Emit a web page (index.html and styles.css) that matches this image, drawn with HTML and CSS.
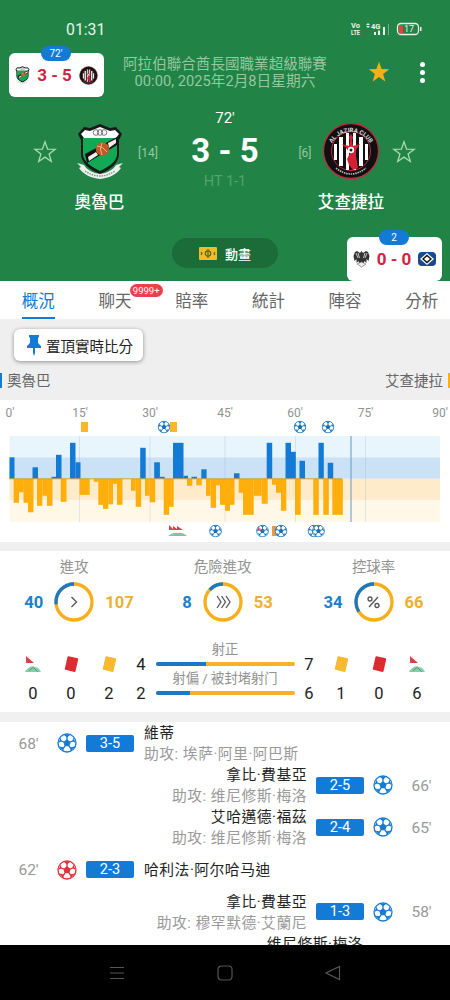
FILE: index.html
```
<!DOCTYPE html>
<html lang="zh-Hant">
<head>
<title>奧魯巴 3 - 5 艾查捷拉</title>
<meta charset="UTF-8">
<meta name="viewport" content="width=device-width, initial-scale=1.0">
<link rel="stylesheet" href="styles.css">
</head>
<body>

<svg class="defs" width="0" height="0">
  <symbol id="ball" viewBox="0 0 20 20">
    <circle cx="10" cy="10" r="9" fill="#fff" stroke="currentColor" stroke-width="1.3"/>
    <path d="M10 6.200l3.700 2.700-1.400 4.300H7.700L6.300 8.900z" fill="currentColor"/>
    <path d="M10 7V3M13 9l4-1.400M12 13l2.500 3.400M8 13l-2.500 3.400M7 9L3 7.600" stroke="currentColor" stroke-width="1.300"/>
    <path d="M6.500 1.600h7L10 4.500zM16.200 4.400l2.600 5.800-3.300-2.200zM18 13.600l-4.800 4.600.7-4zM2 13.600l4.800 4.600-.7-4zM3.800 4.400L1.200 10.200l3.300-2.200z" fill="currentColor"/>
  </symbol>
  <symbol id="star" viewBox="0 0 24 24">
    <path d="M12 1.8l2.6 7.3 7.6.2-6.1 4.7 2.2 7.5L12 17.1l-6.3 4.4L7.9 14 1.8 9.3l7.6-.2z"/>
  </symbol>
  <symbol id="orooba" viewBox="0 0 46 56">
    <path d="M1 11l6-7 6 1 10-4 10 4 6-1 6 7-3 6v14c0 9-9 16-19 20C13 47 4 40 4 31V17z" fill="#151b1a"/>
    <path d="M4 11l4-4 5 1 10-4 10 4 5-1 4 4-3 4H7z" fill="#fff"/>
    <path d="M6 15h34v16c0 8-9 13-17 17C15 44 6 39 6 31z" fill="#12a955"/>
    <g fill="none" stroke="#777" stroke-width="1"><circle cx="19" cy="9.500" r="2.800"/><circle cx="23" cy="9.500" r="2.800"/><circle cx="27" cy="9.500" r="2.800"/></g>
    <path d="M8 31l32-17v8L10 40z" fill="#111"/>
    <path d="M11 34l8-5 2 3-9 6zM31 20l8-4v4l-7 5z" fill="#eee"/>
    <circle cx="25.500" cy="26" r="6.800" fill="#bd5b27"/>
    <path d="M20 23q6 0 10 6M25 20q-3 6 0 12" stroke="#f0b485" stroke-width="1" fill="none"/>
    <path d="M0 40l7 2c3 5 9 8 16 9 7-1 13-4 16-9l7-2-4 4 2 1c-5 7-12 10-21 11C14 55 7 52 2 45l2-1z" fill="#eef2ed"/>
    <path d="M8 48q15 10 30 0" stroke="#87928a" stroke-width="1.400" stroke-dasharray="1.500 1" fill="none"/>
  </symbol>
  <symbol id="jazira" viewBox="0 0 58 58">
    <circle cx="29" cy="29" r="27.5" fill="#101013" stroke="#c02a3b" stroke-width="1.3"/>
    <circle cx="29" cy="29" r="19.5" fill="#111" stroke="#c02a3b"/>
    <path d="M12 22h3v16h-3zM17 15h4v29h-4zM24 11h3v37h-3zM31 11h3v37h-3zM37 15h4v29h-4zM43 22h3v16h-3z" fill="#fff"/>
    <path d="M20 22l7 2 1-5-1-4 2-3 2 3-1 4 1 5 7-2-4 6 0 6 1 6 1 6-5 2-4-5-2-6 3-6-4-5z" fill="#d51f35"/>
    <circle cx="29" cy="28" r="3.2" fill="#fff"/>
    <circle cx="29" cy="28" r="1.5" fill="#222"/>
    <path d="M14 46q15 12 30 0" fill="none" stroke="#bbb" stroke-width="1.600" stroke-dasharray="1.500 .8"/>
  </symbol>
  <symbol id="flag" viewBox="0 0 18 18">
    <path d="M2 1l8 7H2z" fill="#d9404d"/>
    <path d="M1 17c2-4 7-7 10-5 3 0 5 3 6 5z" fill="#8bceac"/>
    <path d="M5 16q4-5 6-2l3 3" stroke="#45a277" fill="none"/>
  </symbol>
</svg>

<header class="header">
  <div class="statusbar">
    <span class="clock">01:31</span>
    <svg width="74" height="16" viewBox="0 0 74 16" fill="#e7f3e9">
      <g font-weight="700"><text x="1" y="7" font-size="7.500">Vo</text><text x="1" y="14" font-size="6.500" textLength="9" lengthAdjust="spacingAndGlyphs">LTE</text><text x="21" y="8" font-size="7.500">4G</text></g>
      <path d="M16 4l2-2 2 2zM16 5h4l-2 2zM24 11h2v3h-2zM28 9.500h2V14h-2zM33 6h2v8h-2z"/>
      <path d="M38 3h1v11h-1z" opacity=".4"/>
      <rect x="47.500" y="2.500" width="21" height="11" rx="3.500" fill="none" stroke="#e7f3e9" stroke-width="1.300"/>
      <path d="M49 4h4v8h-4z" fill="#e5413e"/><path d="M70 6h1.500v4H70z"/>
      <text x="54" y="11.300" font-size="9">17</text>
    </svg>
  </div>

  <div class="league">
    <div class="league-text">
      <div class="league-name">阿拉伯聯合酋長國職業超級聯賽</div>
      <div class="league-date">00:00, 2025年2月8日星期六</div>
    </div>
    <svg class="fav" width="24" height="24"><use href="#star"/></svg>
    <div class="more"><i></i><i></i><i></i></div>
  </div>

  <div class="match">
    <svg class="star-line" width="24" height="24"><use href="#star"/></svg>
    <div class="team">
      <div class="crest"><svg width="46" height="56"><use href="#orooba"/></svg></div>
      <div class="team-name">奧魯巴</div>
    </div>
    <span class="rank">[14]</span>
    <div class="score-col">
      <div class="minute">72'</div>
      <div class="score">3 - 5</div>
      <div class="half">HT 1-1</div>
    </div>
    <span class="rank">[6]</span>
    <div class="team">
      <div class="crest">
        <svg width="58" height="58" viewBox="0 0 58 58">
          <use href="#jazira"/>
          <path id="arcTop" d="M8 27a21.500 21.500 0 0 1 42 0" fill="none"/>
          <text class="crest-text"><textPath href="#arcTop" startOffset="50%">AL JAZIRA CLUB</textPath></text>
        </svg>
      </div>
      <div class="team-name">艾查捷拉</div>
    </div>
    <svg class="star-line" width="24" height="24"><use href="#star"/></svg>
  </div>

  <div class="animate">
    <svg width="18" height="13" viewBox="0 0 18 13">
      <rect width="18" height="13" rx="1" fill="#f5bb24"/>
      <g fill="none" stroke="#4e6a1e" stroke-width="1.200"><circle cx="9" cy="6.500" r="2.700"/><path d="M9 2v9M2 5l1 1.500L2 8M16 5l-1 1.500L16 8"/></g>
    </svg>
    <span>動畫</span>
  </div>

  <div class="float-card float-left">
    <span class="float-min">72'</span>
    <svg width="15" height="18" viewBox="0 0 46 56"><use href="#orooba"/></svg>
    <b>3 - 5</b>
    <svg width="19" height="19" viewBox="0 0 58 58"><use href="#jazira"/></svg>
  </div>
  <div class="float-card float-right">
    <span class="float-min">2</span>
    <svg width="17" height="18" viewBox="0 0 17 18">
      <path d="M8.500 1L7 3 4 1 2 2 .5 6l1 5 2-2v4l2-2 1 3h4l1-3 2 2V9l2 2 1-5L15 2l-2-1-3 2z" fill="#333"/>
      <path d="M3 3l2 5M5 3l1.500 5M14 3l-2 5M12 3l-1.500 5" stroke="#eee" stroke-width=".8"/>
      <path d="M4 14l4.500 3 4.500-3-4.500-2z" fill="#eee" stroke="#777" stroke-width=".7"/>
    </svg>
    <b>0 - 0</b>
    <svg width="18" height="14" viewBox="0 0 18 14">
      <rect width="18" height="14" rx="4" fill="#174a92"/>
      <path d="M9 1l7 6-7 6-7-6z" fill="#fff"/><path d="M9 2.500L14 7l-5 4.500L4 7z" fill="#111"/><path d="M9 4.500L12 7 9 9.500 6 7z" fill="#fff"/>
    </svg>
  </div>
</header>

<nav class="tabs">
  <a class="tab active">概況</a>
  <a class="tab">聊天<span class="badge">9999+</span></a>
  <a class="tab">賠率</a>
  <a class="tab">統計</a>
  <a class="tab">陣容</a>
  <a class="tab">分析</a>
</nav>

<section class="pin-area">
  <button class="pin-btn">
    <svg width="14" height="21" viewBox="0 0 14 21"><path d="M2 0h10v2l-1 1v5l3 3v2H8v5l-1 3-1-3v-5H0v-2l3-3V3L2 2z" fill="#137bd5"/></svg>
    <span>置頂實時比分</span>
  </button>
  <div class="sides">
    <span class="side home">奧魯巴</span>
    <span class="side away">艾查捷拉</span>
  </div>
</section>

<section class="chart">
  <svg id="momentum" width="450" height="142" viewBox="0 0 450 142"></svg>
</section>

<section class="stats">
  <div class="rings">
    <div class="ring-box">
      <div class="ring-title">進攻</div>
      <div class="ring-row"><b class="blue">40</b>
        <svg width="40" height="40" viewBox="0 0 40 40" data-share="27.2"><path d="M17.500 15l5 5-5 5"/></svg>
      <b class="gold">107</b></div>
    </div>
    <div class="ring-box">
      <div class="ring-title">危險進攻</div>
      <div class="ring-row"><b class="blue">8</b>
        <svg width="40" height="40" viewBox="0 0 40 40" data-share="13.1"><path d="M14 14l4 6-4 6M18.500 14l4 6-4 6M23 14l4 6-4 6"/></svg>
      <b class="gold">53</b></div>
    </div>
    <div class="ring-box">
      <div class="ring-title">控球率</div>
      <div class="ring-row"><b class="blue">34</b>
        <svg width="40" height="40" viewBox="0 0 40 40" data-share="34"><path d="M24 15l-9 10"/><circle cx="16" cy="17" r="2"/><circle cx="23" cy="23.500" r="2"/></svg>
      <b class="gold">66</b></div>
    </div>
  </div>

  <div class="counts">
    <div class="count"><svg width="18" height="18"><use href="#flag"/></svg><span>0</span></div>
    <div class="count"><i class="card red"></i><span>0</span></div>
    <div class="count"><i class="card yellow"></i><span>2</span></div>
    <div class="shots">
      <div class="shot"><span>4</span><div class="shot-mid"><label>射正</label><div class="bar"><i style="width: 36.4%"></i></div></div><span>7</span></div>
      <div class="shot"><span>2</span><div class="shot-mid"><label>射偏 / 被封堵射门</label><div class="bar"><i style="width: 25%"></i></div></div><span>6</span></div>
    </div>
    <div class="count"><i class="card yellow"></i><span>1</span></div>
    <div class="count"><i class="card red"></i><span>0</span></div>
    <div class="count"><svg width="18" height="18"><use href="#flag"/></svg><span>6</span></div>
  </div>
</section>

<section class="events">
  <div class="event">
    <span class="time">68'</span><svg class="ball" width="20" height="20"><use href="#ball"/></svg><span class="tag">3-5</span>
    <div class="who"><p>維蒂</p><p class="assist">助攻: 埃萨·阿里·阿巴斯</p></div>
  </div>
  <div class="event right">
    <span class="time">66'</span><svg class="ball" width="20" height="20"><use href="#ball"/></svg><span class="tag">2-5</span>
    <div class="who"><p>拿比·費基亞</p><p class="assist">助攻: 维尼修斯·梅洛</p></div>
  </div>
  <div class="event right">
    <span class="time">65'</span><svg class="ball" width="20" height="20"><use href="#ball"/></svg><span class="tag">2-4</span>
    <div class="who"><p>艾哈邁德·福茲</p><p class="assist">助攻: 维尼修斯·梅洛</p></div>
  </div>
  <div class="event">
    <span class="time">62'</span><svg class="ball own" width="20" height="20"><use href="#ball"/></svg><span class="tag">2-3</span>
    <div class="who"><p>哈利法·阿尔哈马迪</p></div>
  </div>
  <div class="event right">
    <span class="time">58'</span><svg class="ball" width="20" height="20"><use href="#ball"/></svg><span class="tag">1-3</span>
    <div class="who"><p>拿比·費基亞</p><p class="assist">助攻: 穆罕默德·艾蘭尼</p></div>
  </div>
  <div class="event last"><div class="who"><p>维尼修斯·梅洛</p></div></div>
</section>

<footer class="navbar">
  <svg width="16" height="16" viewBox="0 0 16 16"><path d="M1 2.500h14M1 8h14M1 13.500h14"/></svg>
  <svg width="16" height="16" viewBox="0 0 16 16"><rect x="1" y="1" width="14" height="14" rx="3.500"/></svg>
  <svg width="16" height="16" viewBox="0 0 16 16"><path d="M14.500 1.500v13L1 8z"/></svg>
</footer>

<script>
const chart = document.getElementById('momentum');
const zero = 78.8;
// x, width, height
const home = [
  [9.5,5,21.5],[32.5,5.5,11.5],[51.5,5,2],[56,5.5,24],[70,5.5,36],[75.5,5,16.5],
  [140.2,5.5,31],[154.2,5.7,16.5],[160,4.7,2],[173,10.5,36],[183.5,4.5,3],[191.5,5.5,2],[201.3,5.3,9.5],
  [234,5.5,5.5],[266.7,5.5,36],[285.5,5.5,36],[291,4.8,27],[299.5,5.5,18],[318.5,5.3,36],[327.7,5.5,16]
];
const away = [
  [13.7,5.3,24],[19,4.7,13.5],[23.5,4.7,24],[28,5.5,33.5],[37,5.3,27],[42.3,4.7,17],[47,5.5,27],
  [60.7,5.8,23],[79.5,10.2,16],[93.7,4.7,3],[98.3,4.7,26],[103,5.3,30],[108.3,4.7,25.5],
  [113,4,5],[117,5.5,26],[131,4.7,12],[135.7,5.5,28],[145,4.7,17],[149.7,5.5,23.5],[163.7,5.5,36],
  [169,4.7,28],[187,5.3,7],[196.3,5.5,6.5],[206,4.7,17],[210.7,5.3,29],[216,4,6.5],[220,5,26],
  [225,5,32],[230,4.5,26],[238.7,4.5,14],[243,10.7,36],[253.7,8,17],[261.7,6,25],[272,4,6],[276,5,14],
  [281,5.3,32],[295,5.7,36],[313.3,5.5,36],[323.3,5.5,36],[332.3,10.5,36]
];

function rect(x, y, w, h, fill) {
  return `<rect x="${x}" y="${y}" width="${w}" height="${h}" fill="${fill}"/>`;
}
function ball(x, y) {
  return `<use href="#ball" x="${x - 6.5}" y="${y - 6.5}" width="13" height="13" color="#1572bd"/>`;
}

let out = rect(9.5, 36, 430.5, 21.3, '#e9f5fd') + rect(9.5, 57.3, 430.5, 21.5, '#cbe2f6') +
  rect(9.5, 78.8, 430.5, 21.5, '#fdebca') + rect(9.5, 100.3, 430.5, 21.5, '#fff8e8');
[79.5, 150, 225, 295.5, 365.5].forEach(x => { out += rect(x - .5, 36, 1, 86, 'rgba(90,130,150,.15)'); });
home.forEach(b => { out += rect(b[0], zero - b[2], b[1], b[2], '#137bd5'); });
away.forEach(b => { out += rect(b[0], zero, b[1], b[2], '#ffae0c'); });
out += rect(9.5, 78.3, 332.5, 1, '#c9a23c') + rect(350.5, 36, 1, 86, '#6299c8');

[[10, 0], [80, 15], [150, 30], [225, 45], [295, 60], [365.5, 75], [440, 90]].forEach(l => {
  out += `<text class="axis" x="${l[0]}" y="17" text-anchor="middle">${l[1]}'</text>`;
});

out += rect(81, 22, 7, 10, '#ffb529') + ball(164, 27) + rect(170, 22, 7, 10, '#ffb529') + ball(300, 27) + ball(328, 27);
out += '<path d="M169 130v-5l4 4v-3l4 3v-3l6 4z" fill="#d9404d"/><path d="M168 136q6-4 10-3 5-1 9 3z" fill="#8bbfa2"/>';
out += ball(215.5, 131) + ball(262.5, 131) + rect(272, 126, 7, 10, '#e99c42') + ball(281, 131) + ball(314, 131) + ball(318.5, 131);
out += '<path d="M258 126l5 5h-5z" fill="#d9404d" opacity=".6"/>';
chart.innerHTML = out;

document.querySelectorAll('svg[data-share]').forEach(ring => {
  const share = ring.dataset.share;
  ring.insertAdjacentHTML('afterbegin',
    `<circle class="track" cx="20" cy="20" r="18"/>
     <circle class="part" cx="20" cy="20" r="18" pathLength="100" stroke-dasharray="${share} ${100 - share}" stroke-dashoffset="${share}" transform="rotate(-90 20 20)"/>`);
});
</script>

</body>
</html>
```
FILE: styles.css
```
* {
  box-sizing: border-box;
}

body {
  margin: 0;
  width: 450px;
  height: 1000px;
  overflow: hidden;
  display: flex;
  flex-direction: column;
  font-family: Roboto, "Noto Sans CJK TC", sans-serif;
  background: #fff;
  color: #222;
  white-space: nowrap;
}

svg {
  display: block;
  flex-shrink: 0;
}

.defs {
  position: absolute;
}

/* header */
.header {
  position: relative;
  height: 281px;
  flex-shrink: 0;
  background: #228346;
  color: #fff;
}

.statusbar {
  height: 50px;
  padding: 8px 26px 0 66px;
  display: flex;
  align-items: center;
  justify-content: space-between;
}

.clock {
  font-size: 15.8px;
  color: #e7f3e9;
}

.league {
  height: 44px;
  padding: 0 24px 0 123px;
  display: flex;
  align-items: center;
}

.league-text {
  width: 204px;
  padding-top: 1px;
  text-align: center;
  font-size: 14.57px;
  line-height: 17px;
  color: #92c9a0;
}

.league-date {
  font-size: 14.7px;
}

.fav {
  margin-left: 40px;
  fill: #ffae16;
}

.more {
  margin-left: 29px;
  display: grid;
  gap: 3px;
}

.more i {
  width: 5px;
  height: 5px;
  border-radius: 50%;
  background: #fff;
}

.match {
  height: 137px;
  padding: 14px 15px 0 18px;
  display: grid;
  grid-template-columns: 54px 55px 42px 112px 48px 44px 62px;
  justify-items: center;
}

.star-line {
  margin-top: 32px;
  fill: none;
  stroke: #a5dcae;
  stroke-width: 1.3;
}

.team {
  display: flex;
  flex-direction: column;
  align-items: center;
  width: 100%;
}

.crest {
  height: 58px;
  margin-top: 14px;
  display: flex;
  align-items: center;
}

.crest-text {
  font-size: 6px;
  font-weight: 700;
  fill: #ddd;
  text-anchor: middle;
}

.team-name {
  margin-top: 11px;
  font-size: 16.6px;
  font-weight: 500;
  line-height: 24px;
}

.rank {
  margin-top: 37px;
  font-size: 12px;
  line-height: 16px;
  color: #92c9a0;
}

.score-col {
  padding-top: 1px;
  text-align: center;
}

.minute {
  font-size: 15px;
  line-height: 18px;
}

.score {
  font-size: 33px;
  font-weight: 700;
  line-height: 48px;
}

.half {
  font-size: 14.5px;
  line-height: 14px;
  color: #53a46b;
}

.animate {
  width: 106px;
  height: 30px;
  margin: 7px auto 0 172px;
  border-radius: 15px;
  background: #1b6c38;
  display: flex;
  align-items: center;
  justify-content: center;
  gap: 8px;
  font-size: 13px;
  font-weight: 500;
}

.float-card {
  position: absolute;
  width: 95px;
  height: 44px;
  border-radius: 6px;
  background: #fff;
  display: flex;
  align-items: center;
  justify-content: space-between;
  padding: 0 6px;
  color: #cf2440;
}

.float-card b {
  font-size: 17px;
}

.float-left {
  left: 9px;
  top: 53px;
}

.float-right {
  left: 347px;
  top: 237px;
}

.float-min {
  position: absolute;
  left: 32px;
  top: -7px;
  width: 30px;
  height: 15px;
  border-radius: 8px;
  background: #137bd5;
  color: #fff;
  font-size: 10px;
  line-height: 15px;
  text-align: center;
}

/* tabs */
.tabs {
  display: flex;
  height: 38px;
  flex-shrink: 0;
  overflow: hidden;
}

.tab {
  position: relative;
  flex: 0 0 76.7px;
  text-align: center;
  font-size: 16.5px;
  line-height: 42px;
  color: #666;
}

.tab.active {
  color: #137bd5;
}

.tab.active::after {
  content: "";
  position: absolute;
  left: 22px;
  top: 36px;
  width: 33px;
  height: 3px;
  background: #137bd5;
}

.badge {
  position: absolute;
  left: 53px;
  top: 3px;
  width: 33px;
  height: 13px;
  border-radius: 7px;
  background: #ee404c;
  color: #fff;
  font-size: 9.5px;
  line-height: 13px;
}

/* pin button and team names */
.pin-area {
  height: 81px;
  flex-shrink: 0;
  background: #efefef;
  padding-top: 10px;
}

.pin-btn {
  display: flex;
  align-items: center;
  gap: 5px;
  width: 129px;
  height: 32px;
  margin: 0 0 0 14px;
  padding: 0 0 0 13px;
  border: 0;
  border-radius: 6px;
  background: #fff;
  box-shadow: 0 1px 4px rgba(0, 0, 0, .4);
  font-family: inherit;
  font-size: 14.5px;
  color: #222;
}

.sides {
  display: flex;
  justify-content: space-between;
  margin-top: 12px;
  font-size: 14.5px;
  line-height: 16px;
  color: #666;
}

.side {
  height: 15px;
  padding: 1px 5px 0;
}

.home {
  border-left: 2px solid #137bd5;
}

.away {
  border-right: 2px solid #ffae0c;
}

.chart {
  height: 151px;
  flex-shrink: 0;
  border-bottom: 9px solid #efefef;
}

.axis {
  font-size: 12px;
  fill: #929292;
}

/* stats */
.stats {
  height: 171px;
  flex-shrink: 0;
  border-bottom: 10px solid #f0f0f0;
}

.rings {
  display: flex;
  height: 104px;
  padding-top: 6px;
}

.ring-box {
  width: 148.5px;
}

.ring-box:last-child {
  width: 153px;
}

.ring-title {
  text-align: center;
  font-size: 14.4px;
  line-height: 21px;
  color: #929292;
}

.ring-row {
  display: grid;
  grid-template-columns: 1fr 40px 1fr;
  gap: 11px;
  align-items: center;
  margin-top: 4px;
  font-size: 16.6px;
}

.ring-row svg {
  fill: none;
  stroke: #555;
  stroke-width: 1.3;
}

.ring-row .track {
  stroke: #f7ae1b;
  stroke-width: 3.3;
}

.ring-row .part {
  stroke: #1b78c2;
  stroke-width: 3.3;
}

.blue {
  color: #1b7fcb;
  text-align: right;
}

.gold {
  color: #eeb02c;
}

.counts {
  display: flex;
  padding: 0 14px;
  font-size: 16.5px;
}

.count {
  width: 38px;
  display: flex;
  flex-direction: column;
  align-items: center;
}

.count span {
  margin-top: 11px;
  line-height: 20px;
}

.card {
  width: 10.5px;
  height: 14px;
  margin: 2px 0;
  border-radius: 1px;
  transform: rotate(13deg);
}

.red {
  background: #dc2b31;
}

.yellow {
  background: #f7b92e;
}

.shots {
  width: 194px;
  padding: 0 7px;
  margin-top: -16px;
}

.shot {
  display: flex;
  justify-content: space-between;
  height: 29px;
}

.shot > span {
  width: 12px;
  text-align: center;
  line-height: 20px;
  padding-top: 16px;
}

.shot-mid {
  width: 139px;
  text-align: center;
}

.shot-mid label {
  display: block;
  font-size: 13.3px;
  line-height: 19px;
  margin-top: 1px;
  color: #929292;
}

.bar {
  height: 4px;
  margin-top: 3px;
  border-radius: 2px;
  background: #f7b02a;
  overflow: hidden;
}

.bar i {
  display: block;
  height: 4px;
  background: #1b78c2;
}

/* events */
.events {
  height: 223px;
  flex-shrink: 0;
  overflow: hidden;
}

.event {
  display: flex;
  align-items: center;
  height: 42.2px;
  font-size: 14.8px;
}

.event.right {
  flex-direction: row-reverse;
}

.event p {
  margin: 0;
  line-height: 21px;
  letter-spacing: .5px;
}

.who {
  padding: 2px 0 0 1px;
}

.event .assist {
  color: #999;
}

.right .who {
  text-align: right;
}

.time {
  width: 57px;
  padding-top: 1px;
  text-align: center;
  font-size: 15.5px;
  color: #999;
}

.ball {
  color: #137bd5;
}

.own {
  color: #d9333c;
}

.tag {
  width: 48px;
  height: 17px;
  margin: 0 9px;
  border-radius: 2px;
  background: #137bd5;
  color: #fff;
  font-size: 14.5px;
  line-height: 17px;
  text-align: center;
}

.last {
  height: 21px;
  justify-content: flex-end;
  padding-right: 87px;
}

/* phone navigation */
.navbar {
  height: 55px;
  background: #000;
  display: flex;
  justify-content: center;
  align-items: center;
  gap: 92px;
}

.navbar svg {
  fill: none;
  stroke: #555;
  stroke-width: 1.2;
}
```
